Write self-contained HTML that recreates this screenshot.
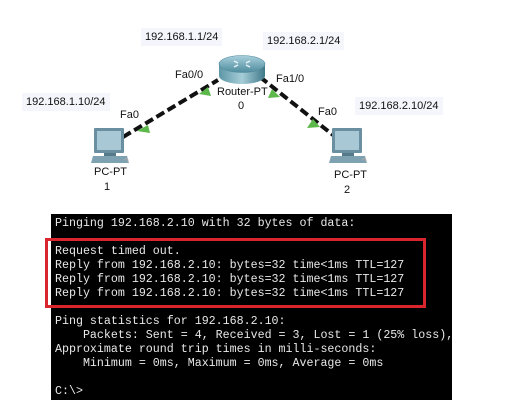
<!DOCTYPE html>
<html><head><meta charset="utf-8"><style>
html,body{margin:0;padding:0;background:#fff;width:531px;height:409px;overflow:hidden;position:relative;font-family:"Liberation Sans",Arial,sans-serif}
.l{position:absolute;font-size:11px;color:#111;white-space:nowrap}
.bg{background:#f4f6fb;padding:3px 4px}
#term{position:absolute;left:51px;top:214px;width:401px;height:186px;background:#000}
pre{position:absolute;left:55px;top:217px;margin:0;font-family:"Liberation Mono",monospace;font-size:11.65px;line-height:14px;color:#e8e8e8}
#red{position:absolute;left:45px;top:238px;width:375px;height:64px;border:3px solid #d9262e}
</style></head><body>
<svg width="531" height="210" style="position:absolute;left:0;top:0">
<defs>
<linearGradient id="rg" x1="0" x2="0" y1="0" y2="1"><stop offset="0" stop-color="#a9d0dc"/><stop offset="1" stop-color="#4f8c9e"/></linearGradient>
<linearGradient id="rs" x1="0" x2="1"><stop offset="0" stop-color="#5d96a6"/><stop offset=".5" stop-color="#a6cdd8"/><stop offset="1" stop-color="#3f7888"/></linearGradient>
</defs>
<line x1="123" y1="137" x2="218" y2="80" stroke="#111" stroke-width="4" stroke-dasharray="9,4"/>
<line x1="260" y1="77" x2="333" y2="135" stroke="#111" stroke-width="4" stroke-dasharray="9,4"/>
<polygon points="137,131 148,125 150,133" fill="#5cb84a"/>
<polygon points="199,94 208,87 211,96" fill="#5cb84a"/>
<polygon points="268,98 272,89 280,97" fill="#5cb84a"/>
<polygon points="307,128 313,119 320,127" fill="#5cb84a"/>
<path d="M219 64 L219 76 A23 8 0 0 0 265 76 L265 64 Z" fill="url(#rs)"/>
<ellipse cx="242" cy="64" rx="23" ry="8.5" fill="url(#rg)" stroke="#4f8c9e" stroke-width=".6"/>
<path d="M234 61 l4 2 M250 61 l-4 2 M234 67 l4 -2 M250 67 l-4 -2" stroke="#e8f4f8" stroke-width="1.5"/>
<g id="pc">
<rect x="94" y="128" width="30" height="25" fill="#6a8fa0" rx="1"/>
<rect x="97" y="131" width="24" height="19" fill="#a9c8d6"/>
<rect x="104" y="153" width="12" height="3" fill="#557a8a"/>
<path d="M93 156 L127 156 L129 163 L91 163 Z" fill="#7fa2b3"/>
<path d="M124 160 q4 -4 4 2" stroke="#aaa" fill="none"/>
</g>
<use href="#pc" transform="translate(238,0)"/>
</svg>
<div class="l bg" style="left:141px;top:28px">192.168.1.1/24</div>
<div class="l bg" style="left:263px;top:32px">192.168.2.1/24</div>
<div class="l bg" style="left:22px;top:93px">192.168.1.10/24</div>
<div class="l bg" style="left:355px;top:97px">192.168.2.10/24</div>
<div class="l" style="left:175px;top:69px">Fa0/0</div>
<div class="l" style="left:276px;top:73px">Fa1/0</div>
<div class="l" style="left:120px;top:109px">Fa0</div>
<div class="l" style="left:318px;top:106px">Fa0</div>
<div class="l" style="left:217px;top:86px">Router-PT</div>
<div class="l" style="left:238px;top:100px">0</div>
<div class="l" style="left:94px;top:166px">PC-PT</div>
<div class="l" style="left:104px;top:181px">1</div>
<div class="l" style="left:334px;top:169px">PC-PT</div>
<div class="l" style="left:344px;top:184px">2</div>
<div id="term"></div>
<pre>Pinging 192.168.2.10 with 32 bytes of data:

Request timed out.
Reply from 192.168.2.10: bytes=32 time&lt;1ms TTL=127
Reply from 192.168.2.10: bytes=32 time&lt;1ms TTL=127
Reply from 192.168.2.10: bytes=32 time&lt;1ms TTL=127

Ping statistics for 192.168.2.10:
    Packets: Sent = 4, Received = 3, Lost = 1 (25% loss),
Approximate round trip times in milli-seconds:
    Minimum = 0ms, Maximum = 0ms, Average = 0ms

C:\&gt;</pre>
<div id="red"></div>
</body></html>
